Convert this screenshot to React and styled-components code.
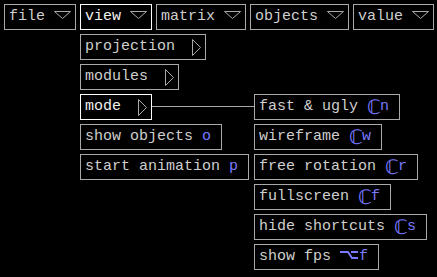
import React from "react"
import styled, { createGlobalStyle } from "styled-components"

const GlobalStyle = createGlobalStyle`
  html, body {
    margin: 0;
    background: #000;
  }
  #root {
    width: 437px;
    height: 277px;
    background: #000;
  }
`

const Page = styled.div`
  padding: 4px;
  font-family: "Liberation Mono", "DejaVu Sans Mono", monospace;
  font-size: 15px;
  color: #cfcfcf;
`

const MenuBar = styled.div`
  display: flex;
  gap: 4px;
  align-items: flex-start;
`

const Menu = styled.div`
  position: relative;
`

const Box = styled.div`
  display: inline-flex;
  align-items: center;
  box-sizing: border-box;
  height: 26px;
  line-height: 24px;
  white-space: pre;
  border: 1px solid ${(p) => (p.$active ? "#ffffff" : "#a9a9a9")};
  color: ${(p) => (p.$active ? "#f0f0f0" : "#cfcfcf")};
  padding: 0 ${(p) => (p.$shortcut ? "10px" : "4px")} 0 4px;
`

const Dropdown = styled.div`
  position: absolute;
  top: 30px;
  left: 0;
  display: flex;
  flex-direction: column;
  align-items: flex-start;
  gap: 4px;
`

const Entry = styled.div`
  position: relative;
`

const Submenu = styled.div`
  position: absolute;
  top: 0;
  left: 100%;
  display: flex;
  align-items: flex-start;
`

const Connector = styled.div`
  width: 102px;
  height: 1px;
  margin-top: 12px;
  background: #a9a9a9;
`

const SubList = styled.div`
  display: flex;
  flex-direction: column;
  align-items: flex-start;
  gap: 4px;
`

const Key = styled.span`
  color: #7a7aff;
`

const Cmd = styled.span`
  display: inline-block;
  width: 13px;
  color: #7a7aff;
  font-family: "DejaVu Sans", sans-serif;
  font-size: 20px;
  line-height: 24px;
  text-align: left;
`

const DownArrow = styled.svg`
  margin: 0 0 4px 9px;
  flex-shrink: 0;
`

const RightArrow = styled.svg`
  margin-left: 17px;
  flex-shrink: 0;
`

const OptionIcon = styled.svg`
  display: inline-block;
  width: 19px;
  flex-shrink: 0;
`

const Down = () => (
  <DownArrow width="17" height="8" viewBox="0 0 17 8">
    <polygon points="0.5,0.5 16.5,0.5 8.5,7.5" fill="none" stroke="#a9a9a9" strokeWidth="1" />
  </DownArrow>
)

const Right = () => (
  <RightArrow width="9" height="17" viewBox="0 0 9 17">
    <polygon points="0.5,0.5 8.5,8.5 0.5,16.5" fill="none" stroke="#a9a9a9" strokeWidth="1" />
  </RightArrow>
)

const Option = () => (
  <OptionIcon height="24" viewBox="0 0 19 24">
    <path d="M0 7 H8 L12 13 H18 M11 7 H18" fill="none" stroke="#7a7aff" strokeWidth="2" />
  </OptionIcon>
)

const menus = ["file", "view", "matrix", "objects", "value"]

const modes = [
  { label: "fast & ugly ", key: "n" },
  { label: "wireframe ", key: "w" },
  { label: "free rotation ", key: "r" },
  { label: "fullscreen ", key: "f" },
  { label: "hide shortcuts ", key: "s" },
]

const App = () => {
  return (
    <Page>
      <GlobalStyle />
      <MenuBar>
        {menus.map((name) => (
          <Menu key={name}>
            <Box $active={name === "view"}>
              {name}
              <Down />
            </Box>
            {name === "view" && (
              <Dropdown>
                <Box>
                  projection
                  <Right />
                </Box>
                <Box>
                  modules
                  <Right />
                </Box>
                <Entry>
                  <Box $active>
                    mode
                    <Right />
                  </Box>
                  <Submenu>
                    <Connector />
                    <SubList>
                      {modes.map((m) => (
                        <Box $shortcut key={m.label}>
                          {m.label}
                          <Cmd>ℂ</Cmd>
                          <Key>{m.key}</Key>
                        </Box>
                      ))}
                      <Box $shortcut>
                        show fps <Option />
                        <Key>f</Key>
                      </Box>
                    </SubList>
                  </Submenu>
                </Entry>
                <Box $shortcut>
                  show objects <Key>o</Key>
                </Box>
                <Box $shortcut>
                  start animation <Key>p</Key>
                </Box>
              </Dropdown>
            )}
          </Menu>
        ))}
      </MenuBar>
    </Page>
  )
}

export default App
